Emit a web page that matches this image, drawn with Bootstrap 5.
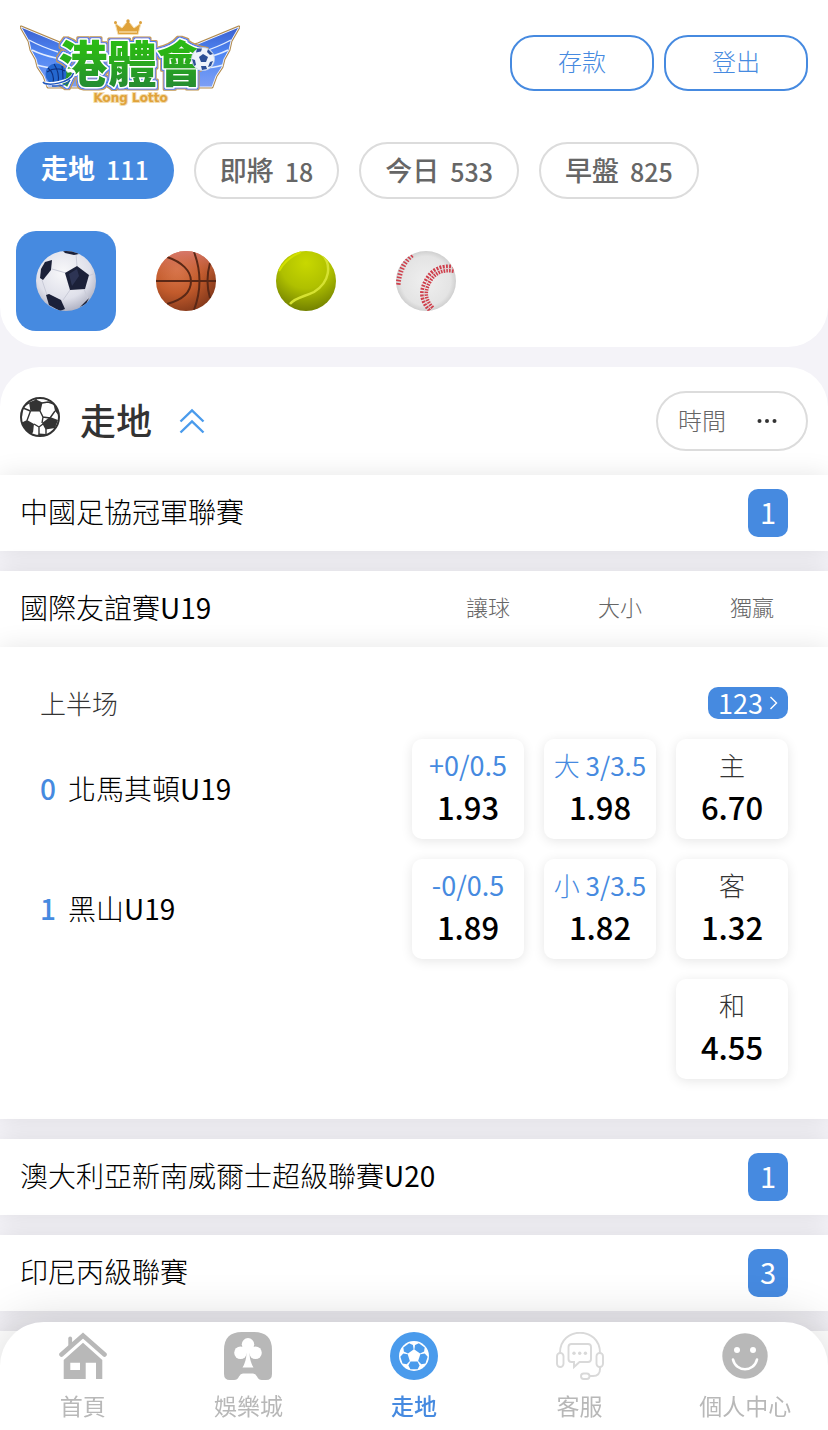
<!DOCTYPE html>
<html lang="zh-Hant">
<head>
<meta charset="utf-8">
<meta name="viewport" content="width=device-width, initial-scale=1">
<title>港體會</title>
<link href="https://cdn.jsdelivr.net/npm/bootstrap@5.3.0/dist/css/bootstrap.min.css" rel="stylesheet">
<style>
:root{--blue:#468ae0;--sky:#4a9bec;--line:#dcdcdc;--soft:0 0 24px rgba(0,0,0,.1)}
body{font-family:"Noto Sans CJK TC","Noto Sans CJK SC",sans-serif;font-weight:300;color:#000;background:#f4f3f8;line-height:1.2;padding-bottom:20px;overflow-x:hidden}
a{text-decoration:none}
button{color:inherit;font-weight:inherit}
.latin{font-weight:400}
.gap-20{gap:20px}
.top-panel{border-radius:0 0 40px 40px;padding:0 16px 16px}
.brand-bar{height:126px;padding-right:4px;padding-left:4px}
.account-btn{width:144px;height:56px;border:2px solid var(--blue);border-radius:24px;color:var(--blue);font-size:24px;font-weight:300;padding:0 0 4px}
.tab-row{padding-top:16px}
.sport-row{padding-top:32px}
.tab-pill{height:57px;border:2px solid var(--line);border-radius:29px;padding:0 24px;background:#fff;color:#666;font-size:27px;font-weight:500;gap:11px}
.tab-pill .count{font-size:25px;font-weight:500}
.tab-pill.active{background:var(--blue);border-color:var(--blue);color:#fff;font-weight:700;padding:0 23px 4px}
.sport-tile{width:100px;height:100px;border:0;border-radius:20px;background:none}
.sport-tile.active{background:var(--blue)}
.list-panel{border-radius:40px 40px 0 0;margin-top:20px}
.list-head{height:108px;padding:0 20px}
.list-title{font-size:36px;font-weight:500;color:#333;margin:0 0 2px 20px}
.fold-btn{margin-left:27px}
.sort-btn{width:152px;height:60px;border:2px solid var(--line);border-radius:30px;background:#fff;color:#666;font-size:24px;padding:0 28px 0 20px}
.sort-btn span{padding-bottom:2px}
.league-list{background:#f4f3f8}
.league{min-height:76px;padding:0 40px 0 20px;border:0;background:#fff;box-shadow:var(--soft);font-size:28px}
.league.with-cols{padding-right:10px}
.league-name{padding-bottom:2px}
.league-count{width:40px;height:48px;border-radius:10px;background:var(--blue);color:#fff;font-size:29px;font-weight:400;padding-bottom:3px}
.col-name{width:132px;font-size:22px;color:#666;padding-bottom:5px}
.fixture{padding:40px;box-shadow:var(--soft)}
.fixture-top{margin-bottom:20px}
.period{font-size:26px;color:#333;padding-bottom:1px}
.more-btn{width:80px;height:32px;border:0;border-radius:10px;background:var(--blue);color:#fff;font-size:27px;gap:6px}
.side{font-size:28px}
.score{width:28px;color:var(--blue);font-weight:500}
.odd{width:112px;height:100px;border:0;border-radius:10px;background:#fff;box-shadow:0 2px 12px rgba(0,0,0,.1);padding:0 0 6px}
.odd .line-name{font-size:26px;line-height:42px;color:var(--blue)}
.odd .line-name.latin{font-size:27px}
.odd .pick{color:#333}
.odd .price{font-size:31px;line-height:42px;font-weight:500}
.dock{height:108px;border-radius:44px 44px 0 0;box-shadow:0 0 50px rgba(0,0,0,.16)}
.dock a{color:#b8b8b8;font-size:23px;font-weight:400;padding-top:10px;gap:12px;flex:1 1 0}
.dock a.active{color:var(--blue);font-weight:500}
</style>
</head>
<body>
<header class="top-panel bg-white">
  <div class="brand-bar d-flex align-items-center justify-content-between">
    <a href="#" aria-label="港體會 Kong Lotto">
      <svg width="220" height="88" viewBox="0 0 220 88" class="d-block">
        <defs>
          <linearGradient id="wing" x1="0" y1="0" x2="0" y2="1"><stop offset="0" stop-color="#3a5fd0"/><stop offset=".45" stop-color="#4f86f2"/><stop offset="1" stop-color="#7d9ff5"/></linearGradient>
          <linearGradient id="leaf" x1="0" y1="0" x2="0" y2="1"><stop offset="0" stop-color="#2bc60c"/><stop offset=".45" stop-color="#2bb01a"/><stop offset="1" stop-color="#23803a"/></linearGradient>
          <filter id="rim" x="-10%" y="-20%" width="120%" height="140%">
            <feMorphology in="SourceAlpha" operator="dilate" radius="1" result="a"/>
            <feFlood flood-color="#4a80f0"/><feComposite in2="a" operator="in" result="blue"/>
            <feMorphology in="SourceAlpha" operator="dilate" radius="2" result="b"/>
            <feFlood flood-color="#c39a54"/><feComposite in2="b" operator="in" result="gold"/>
            <feMerge><feMergeNode in="gold"/><feMergeNode in="blue"/><feMergeNode in="SourceGraphic"/></feMerge>
          </filter>
          <g id="wingShape">
            <path d="M1 8 L42 25 L60 30 V68 L28 68 L24 57 L18 48 L16 40 L11 31 L9 22 Z" fill="url(#wing)" stroke="#b28a4b" stroke-width="3" stroke-linejoin="round"/>
            <path d="M1 8 L42 25 L60 30 V68 L28 68 L24 57 L18 48 L16 40 L11 31 L9 22 Z" fill="url(#wing)" stroke="#e9efff" stroke-width="1"/>
            <path d="M9 21 Q22 28 38 33 M12 31 Q22 36 36 39 M17 46 Q26 49 38 49" fill="none" stroke="#e3edff" stroke-width="1.4"/>
          </g>
        </defs>
        <use href="#wingShape"/>
        <use href="#wingShape" transform="matrix(-1 0 0 1 220 0)"/>
        <text x="112" y="63" font-family="Noto Sans CJK TC, sans-serif" font-weight="900" font-size="49" text-anchor="middle" stroke-linejoin="round" fill="url(#leaf)" stroke="#fff" stroke-width="3" paint-order="stroke" filter="url(#rim)">港體會</text>
        <path d="M98 15.500 L95 4 L102 9 L108 1.500 L114 9 L121 4 L118 15.500 Z" fill="#dfa23a" stroke="#f7dfae" stroke-width="1"/>
        <path d="M99 13 h18" stroke="#fff0cf" stroke-width="1"/>
        <g fill="#dca03c"><circle cx="95.500" cy="3.500" r="1.500"/><circle cx="108" cy="2" r="1.700"/><circle cx="120.500" cy="3.500" r="1.500"/></g>
        <circle cx="36" cy="55" r="10.500" fill="#2467cf"/>
        <path d="M27 53 Q36 47 45 52 M34 45 Q40 54 38 64 M28 49 Q35 55 33 64 M42 47 Q43 54 43 60" fill="none" stroke="#0e2f7d" stroke-width="1.100"/>
        <path d="M24 63 C25 67 52 64 54 54 C53 51 50 51 47 52" fill="none" stroke="#fff" stroke-width="3.600"/>
        <path d="M23 63 C26 68 51 64 53.500 54 M32 67 Q46 68 50 61" fill="none" stroke="#2056bb" stroke-width="1.500"/>
        <circle cx="183" cy="40" r="11.500" fill="#eef3fb" stroke="#bdd0ea" stroke-width=".7"/>
        <g fill="#2c4f96"><path d="M179 38 l4-3 5 3 -2 5 h-5z"/><path d="M177 29.500 l5 0 -1 3 -5 1z"/><path d="M188 30 l5 5 -3 1 -3-3z"/><path d="M172 40 l3 1 1 5 -2 1z"/><path d="M181 47 l5 0 1 3 -5 1z"/><path d="M190 43 l3-1 -2 5 -3 1z"/></g>
        <text x="110.500" y="83" text-anchor="middle" font-family="DejaVu Sans, sans-serif" font-weight="700" font-size="12" fill="#e0a33a" stroke="#f3dcae" stroke-width="2" paint-order="stroke">Kong Lotto</text>
      </svg>
    </a>
    <div class="d-flex" style="gap:10px">
      <button type="button" class="btn account-btn">存款</button>
      <button type="button" class="btn account-btn">登出</button>
    </div>
  </div>

  <div class="tab-row gap-20 d-flex">
    <button type="button" class="tab-pill active d-flex align-items-center"><span>走地</span><span class="count">111</span></button>
    <button type="button" class="tab-pill d-flex align-items-center"><span>即將</span><span class="count">18</span></button>
    <button type="button" class="tab-pill d-flex align-items-center"><span>今日</span><span class="count">533</span></button>
    <button type="button" class="tab-pill d-flex align-items-center"><span>早盤</span><span class="count">825</span></button>
  </div>

  <div class="sport-row gap-20 d-flex">
    <button type="button" class="sport-tile active d-flex align-items-center justify-content-center p-0" aria-label="足球">
      <svg width="60" height="60" viewBox="0 0 60 60">
        <defs><radialGradient id="gs" cx=".45" cy=".35" r=".75"><stop offset="0" stop-color="#f8f8fa"/><stop offset=".6" stop-color="#dfe0ea"/><stop offset="1" stop-color="#9b9eb2"/></radialGradient><clipPath id="ball"><circle cx="30" cy="30" r="30"/></clipPath></defs>
        <g clip-path="url(#ball)"><rect width="60" height="60" fill="url(#gs)"/>
          <path d="M16 18 L30 22 M52 25 L60 22 M34 39 L27 49 M48 38 L52 48 M41 15 L40 3 M6 29 L11 44" stroke="#c9cbd8" stroke-width="1" fill="none"/>
          <g fill="#1b2038"><path d="M29 22 L41 15 L53 24 L49 38 L34 39 Z"/><path d="M5 18 L9 11 L16 9 L15 19 L7 29 L4 27 Z"/><path d="M10 44 L13 43 L25 49 L29 58 L24 60 L13 54 Z"/><path d="M27 0 H40 L43 3 L38 4 L29 2 Z"/><path d="M53 47 L50 53 L44 56 Z"/></g>
          <path d="M33 23 L41 18 L43 25 L36 35 Z" fill="#3a4268" opacity=".6"/></g>
      </svg>
    </button>
    <button type="button" class="sport-tile d-flex align-items-center justify-content-center p-0" aria-label="籃球">
      <svg width="60" height="60" viewBox="0 0 60 60">
        <defs><radialGradient id="gb" cx=".35" cy=".3" r=".8"><stop offset="0" stop-color="#dc7b50"/><stop offset=".5" stop-color="#c25b2c"/><stop offset="1" stop-color="#7d3519"/></radialGradient><linearGradient id="gb2" x1="0" y1="0" x2="0" y2="1"><stop offset="0" stop-color="#d97a72" stop-opacity=".9"/><stop offset=".5" stop-color="#c95f2d" stop-opacity="0"/></linearGradient></defs>
        <g clip-path="url(#ball)"><rect width="60" height="60" fill="url(#gb)"/><rect width="60" height="60" fill="url(#gb2)"/>
          <g fill="none" stroke="#5a2816" stroke-width="2"><path d="M0 30 H60"/><path d="M11 6 C26 11 35 20 35 30 C35 41 26 49 11 53"/><path d="M38 1 Q49 30 38 59"/><path d="M54 12 Q49 30 54 47"/></g></g>
      </svg>
    </button>
    <button type="button" class="sport-tile d-flex align-items-center justify-content-center p-0" aria-label="網球">
      <svg width="60" height="60" viewBox="0 0 60 60">
        <defs><radialGradient id="gt" cx=".5" cy=".2" r=".85"><stop offset="0" stop-color="#c8d800"/><stop offset=".5" stop-color="#afc000"/><stop offset="1" stop-color="#6b7900"/></radialGradient></defs>
        <g clip-path="url(#ball)"><rect width="60" height="60" fill="url(#gt)"/>
          <path d="M46 3 C56 14 54 31 38 41 C28 46 20 46 14 53" fill="none" stroke="#d6e232" stroke-width="2.500"/>
          <path d="M3 20 Q10 7 25 1" fill="none" stroke="#d3e000" stroke-width="2"/></g>
      </svg>
    </button>
    <button type="button" class="sport-tile d-flex align-items-center justify-content-center p-0" aria-label="棒球">
      <svg width="60" height="60" viewBox="0 0 60 60">
        <defs><radialGradient id="gw" cx=".5" cy=".5" r=".55"><stop offset="0" stop-color="#efefef"/><stop offset=".75" stop-color="#e4e4e4"/><stop offset="1" stop-color="#c4c4c4"/></radialGradient></defs>
        <g clip-path="url(#ball)"><rect width="60" height="60" fill="url(#gw)"/>
          <g fill="none" stroke="#cf3f4c"><path d="M58 18 C46 16 38 20 33 28 C26 39 26 49 36 59" stroke-width="8" stroke-dasharray="1.800 1.200"/><path d="M16 4 Q4 14 2 34" stroke-width="5" stroke-dasharray="1.600 1.600"/></g>
          <path d="M58 18 C46 16 38 20 33 28 C26 39 26 49 36 59" fill="none" stroke="#ded3d3" stroke-width="1"/></g>
      </svg>
    </button>
  </div>
</header>

<main class="list-panel bg-white">
  <div class="list-head d-flex align-items-center">
    <svg width="40" height="40" viewBox="0 0 40 40" class="mb-2">
      <defs><clipPath id="mini"><circle cx="20" cy="20" r="19"/></clipPath></defs>
      <g clip-path="url(#mini)"><g fill="#333"><path d="M9 5.500 L16 2.500 L22.500 5.500 L20.500 14.500 L10.500 14.500Z"/><path d="M-1 27 L7 23 L14 27 L13 35.500 L6 39Z"/><path d="M22 26 L30 20 L38 23 L35 31 L25.500 32.500Z"/><path d="M33 4 L42 13 L40 20 L35 14Z"/><path d="M15 41 L19 36.500 L26 37 L29 41Z"/><path d="M-1 9 L3 11 L2 20 L-2 20Z"/></g>
      <path d="M16 3V0 M22 6 L28 5 L34 7 M20 14 L23 20 L30 21 M23 20 L22 26 M10.500 14 L7 23.500 M10.500 14 L3 11 M14 27 L19 30 L23 27 M19 30 L19 37 M9 6 L4 9 M30 21 L35 14 M26 32 L26 37 M34 31 L37 32" stroke="#333" stroke-width="1.400" fill="none"/></g>
      <circle cx="20" cy="20" r="19" fill="none" stroke="#333" stroke-width="2"/>
    </svg>
    <h1 class="list-title">走地</h1>
    <button type="button" class="fold-btn border-0 bg-transparent p-0 d-flex" aria-label="收合">
      <svg width="26" height="26" viewBox="0 0 26 26" fill="none" stroke="#4a9bec" stroke-width="2.400"><path d="M1.500 13.500 L13 2.500 L24.500 13.500 M1.500 24.500 L13 13.500 L24.500 24.500"/></svg>
    </button>
    <button type="button" class="sort-btn d-flex align-items-center justify-content-between ms-auto"><span>時間</span>
      <svg width="22" height="6" viewBox="0 0 22 6" fill="#333"><circle cx="3.500" cy="3" r="2"/><circle cx="11" cy="3" r="2"/><circle cx="18.500" cy="3" r="2"/></svg>
    </button>
  </div>

  <div class="league-list gap-20 d-flex flex-column">
    <button type="button" class="league d-flex align-items-center justify-content-between w-100"><span class="league-name">中國足協冠軍聯賽</span><span class="league-count d-flex align-items-center justify-content-center">1</span></button>

    <section>
      <div class="league with-cols d-flex align-items-center">
        <span class="league-name me-auto">國際友誼賽<span class="latin">U19</span></span>
        <span class="col-name text-center">讓球</span><span class="col-name text-center">大小</span><span class="col-name text-center">獨贏</span>
      </div>
      <div class="fixture bg-white">
        <div class="fixture-top d-flex align-items-center justify-content-between">
          <span class="period">上半场</span>
          <button type="button" class="more-btn d-flex align-items-center justify-content-center p-0"><span class="latin">123</span><svg width="9" height="14" viewBox="0 0 9 14" fill="none" stroke="#fff" stroke-width="1.400"><path d="M1.500 1 L7.500 7 L1.500 13"/></svg></button>
        </div>
        <div class="d-flex flex-column gap-20">
          <div class="d-flex align-items-center side gap-20">
            <span class="d-flex me-auto"><span class="score">0</span><span>北馬其頓<span class="latin">U19</span></span></span>
            <button type="button" class="odd"><span class="line-name latin d-block">+0/0.5</span><span class="price d-block">1.93</span></button>
            <button type="button" class="odd"><span class="line-name d-block">大 <span class="latin">3/3.5</span></span><span class="price d-block">1.98</span></button>
            <button type="button" class="odd"><span class="line-name pick d-block">主</span><span class="price d-block">6.70</span></button>
          </div>
          <div class="d-flex align-items-center side gap-20">
            <span class="d-flex me-auto"><span class="score">1</span><span>黑山<span class="latin">U19</span></span></span>
            <button type="button" class="odd"><span class="line-name latin d-block">-0/0.5</span><span class="price d-block">1.89</span></button>
            <button type="button" class="odd"><span class="line-name d-block">小 <span class="latin">3/3.5</span></span><span class="price d-block">1.82</span></button>
            <button type="button" class="odd"><span class="line-name pick d-block">客</span><span class="price d-block">1.32</span></button>
          </div>
          <div class="d-flex justify-content-end">
            <button type="button" class="odd"><span class="line-name pick d-block">和</span><span class="price d-block">4.55</span></button>
          </div>
        </div>
      </div>
    </section>

    <button type="button" class="league d-flex align-items-center justify-content-between w-100"><span class="league-name">澳大利亞新南威爾士超級聯賽<span class="latin">U20</span></span><span class="league-count d-flex align-items-center justify-content-center">1</span></button>
    <button type="button" class="league d-flex align-items-center justify-content-between w-100"><span class="league-name">印尼丙級聯賽</span><span class="league-count d-flex align-items-center justify-content-center">3</span></button>
    <div class="league"></div>
  </div>
</main>

<nav class="dock fixed-bottom bg-white d-flex">
  <a href="#" class="d-flex flex-column align-items-center">
    <svg width="48" height="48" viewBox="0 0 48 48" fill="#b8b8b8"><path d="M2.500 22.500 L24 3.500 L45.500 22.500" fill="none" stroke="#b8b8b8" stroke-width="4.600" stroke-linecap="round" stroke-linejoin="miter"/><path d="M9.300 14 V6.500 a1.900 1.900 0 0 1 3.800 0 V11Z"/><path fill-rule="evenodd" d="M24 10.700 L43.300 28 V47 H37 V30.700 H26.700 V47 H4.700 V28Z M11.300 30.700 V38 H21 V30.700Z"/></svg>
    <span>首頁</span></a>
  <a href="#" class="d-flex flex-column align-items-center">
    <svg width="48" height="48" viewBox="0 0 48 48"><path d="M18 0 H30 Q48 0 48 18 V42 Q48 48 42 48 H38 Q34.500 48 33 44.500 Q31.500 41.500 29 41.500 H19 Q16.500 41.500 15 44.500 Q13.500 48 10 48 H6 Q0 48 0 42 V18 Q0 0 18 0Z" fill="#b8b8b8"/><g fill="#fff"><circle cx="24" cy="12.300" r="6.200"/><circle cx="16.500" cy="20.700" r="6.300"/><circle cx="31.500" cy="20.700" r="6.300"/><path d="M20 15 H28 L25.500 22 Q26 30 29.500 35.500 H18.500 Q22 30 22.500 22Z"/></g></svg>
    <span>娛樂城</span></a>
  <a href="#" class="active d-flex flex-column align-items-center" aria-current="page">
    <svg width="48" height="48" viewBox="-24 -24 48 48"><circle r="24" fill="#4a9bec"/><circle r="15" fill="#fff"/><g fill="#4a9bec"><path id="patch" d="M-3.500 5.500 H3.500 L5.600 9.500 L3.600 13.200 H-3.600 L-5.600 9.500Z"/><use href="#patch" transform="rotate(72)"/><use href="#patch" transform="rotate(144)"/><use href="#patch" transform="rotate(216)"/><use href="#patch" transform="rotate(288)"/></g></svg>
    <span>走地</span></a>
  <a href="#" class="d-flex flex-column align-items-center">
    <svg width="48" height="48" viewBox="0 0 48 48" fill="none" stroke="#d9d9d9" stroke-width="1.900"><path d="M4 21 C4 -6 44 -6 44 21 M44 35 V37 Q44 44 37 44 H33"/><rect x="1" y="21" width="6.500" height="14" rx="3.200"/><rect x="40.500" y="21" width="6.500" height="14" rx="3.200"/><rect x="25" y="41.500" width="8.500" height="5.500" rx="2.700"/><path d="M15.500 12 H32 Q35 12 35 15 V27 Q35 30 32 30 H23.500 L18 35 V30 H15.500 Q12.500 30 12.500 27 V15 Q12.500 12 15.500 12Z"/><g fill="#d9d9d9" stroke="none"><circle cx="18" cy="21.300" r="1.700"/><circle cx="23.700" cy="21.300" r="1.700"/><circle cx="29.400" cy="21.300" r="1.700"/></g></svg>
    <span>客服</span></a>
  <a href="#" class="d-flex flex-column align-items-center">
    <svg width="48" height="48" viewBox="0 0 48 48"><circle cx="24" cy="24" r="22.700" fill="#b8b8b8"/><circle cx="16" cy="18" r="3" fill="#fff"/><circle cx="32" cy="18" r="3" fill="#fff"/><path d="M12 27.500 C15 40.500 33 40.500 36 27.500" fill="none" stroke="#fff" stroke-width="2.600" stroke-linecap="round"/></svg>
    <span>個人中心</span></a>
</nav>
<script src="https://cdn.jsdelivr.net/npm/bootstrap@5.3.0/dist/js/bootstrap.bundle.min.js"></script>
</body>
</html>
